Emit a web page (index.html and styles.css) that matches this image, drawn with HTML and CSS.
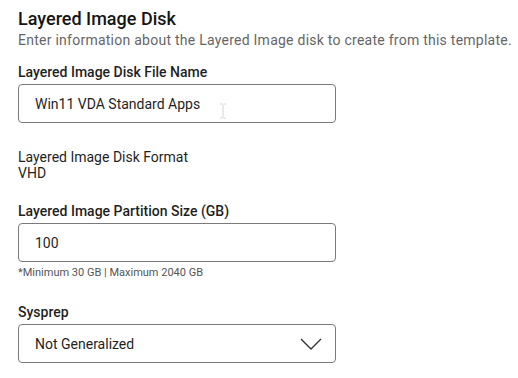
FILE: index.html
```html
<!DOCTYPE html>
<html lang="en">
<head>
    <meta charset="UTF-8">
    <title>Layered Image Disk</title>
    <link rel="stylesheet" href="styles.css">
</head>
<body>
    <div class="panel">
        <h2>Layered Image Disk</h2>
        <p class="intro">Enter information about the Layered Image disk to create from this template.</p>

        <div class="field">
            <label for="fileName">Layered Image Disk File Name</label>
            <div class="input-wrap">
                <input type="text" id="fileName" value="Win11 VDA Standard Apps">
                <svg class="ibeam" width="8" height="16" viewBox="0 0 8 16">
                    <path d="M1 1h2.5M4.5 1H7M4 1.5v13M1 15h2.5M4.5 15H7" stroke="#d4d4d4" stroke-width="1" fill="none"/>
                </svg>
            </div>
        </div>

        <div class="readonly">
            <div>Layered Image Disk Format</div>
            <div>VHD</div>
        </div>

        <div class="field field-hint">
            <label for="partSize">Layered Image Partition Size (GB)</label>
            <input type="text" id="partSize" value="100">
            <div class="hint">*Minimum 30 GB | Maximum 2040 GB</div>
        </div>

        <div class="field">
            <label for="sysprep">Sysprep</label>
            <div class="select">
                <span>Not Generalized</span>
                <svg width="22" height="12" viewBox="0 0 22 12">
                    <path d="M1 1l10 10L21 1" stroke="#333" stroke-width="1.4" fill="none"/>
                </svg>
            </div>
        </div>
    </div>
</body>
</html>
```

FILE: styles.css
```css
body {
    margin: 0;
    font-family: 'Roboto', 'Inter', sans-serif;
    background: #fff;
    color: #1f1f1f;
}
.panel {
    padding: 7px 0 0 18px;
}
h2 {
    margin: 0;
    font-size: 18px;
    font-weight: 500;
    line-height: 24px;
    color: #151515;
}
.intro {
    margin: -1px 0 12px;
    font-size: 14px;
    line-height: 20px;
    letter-spacing: 0.25px;
    white-space: nowrap;
    color: #666;
}
.field {
    margin-bottom: 26px;
}
.field-hint {
    margin-bottom: 22px;
}
label {
    display: block;
    font-size: 14px;
    font-weight: 500;
    line-height: 20px;
    margin-bottom: 2px;
    color: #1f1f1f;
}
input[type="text"], .select {
    box-sizing: border-box;
    width: 318px;
    height: 39px;
    padding: 0 16px;
    border: 1px solid #7a7a7a;
    border-radius: 4px;
    font-family: inherit;
    font-size: 14px;
    color: #1f1f1f;
    background: #fff;
    outline: none;
}
.input-wrap {
    position: relative;
    width: 318px;
}
.ibeam {
    position: absolute;
    left: 201px;
    top: 19px;
}
.readonly {
    font-size: 14px;
    line-height: 16px;
    margin-bottom: 20px;
}
.hint {
    font-size: 11px;
    line-height: 14px;
    margin-top: 4px;
    color: #555;
}
.select {
    display: flex;
    align-items: center;
    justify-content: space-between;
    padding-right: 13px;
}
```
